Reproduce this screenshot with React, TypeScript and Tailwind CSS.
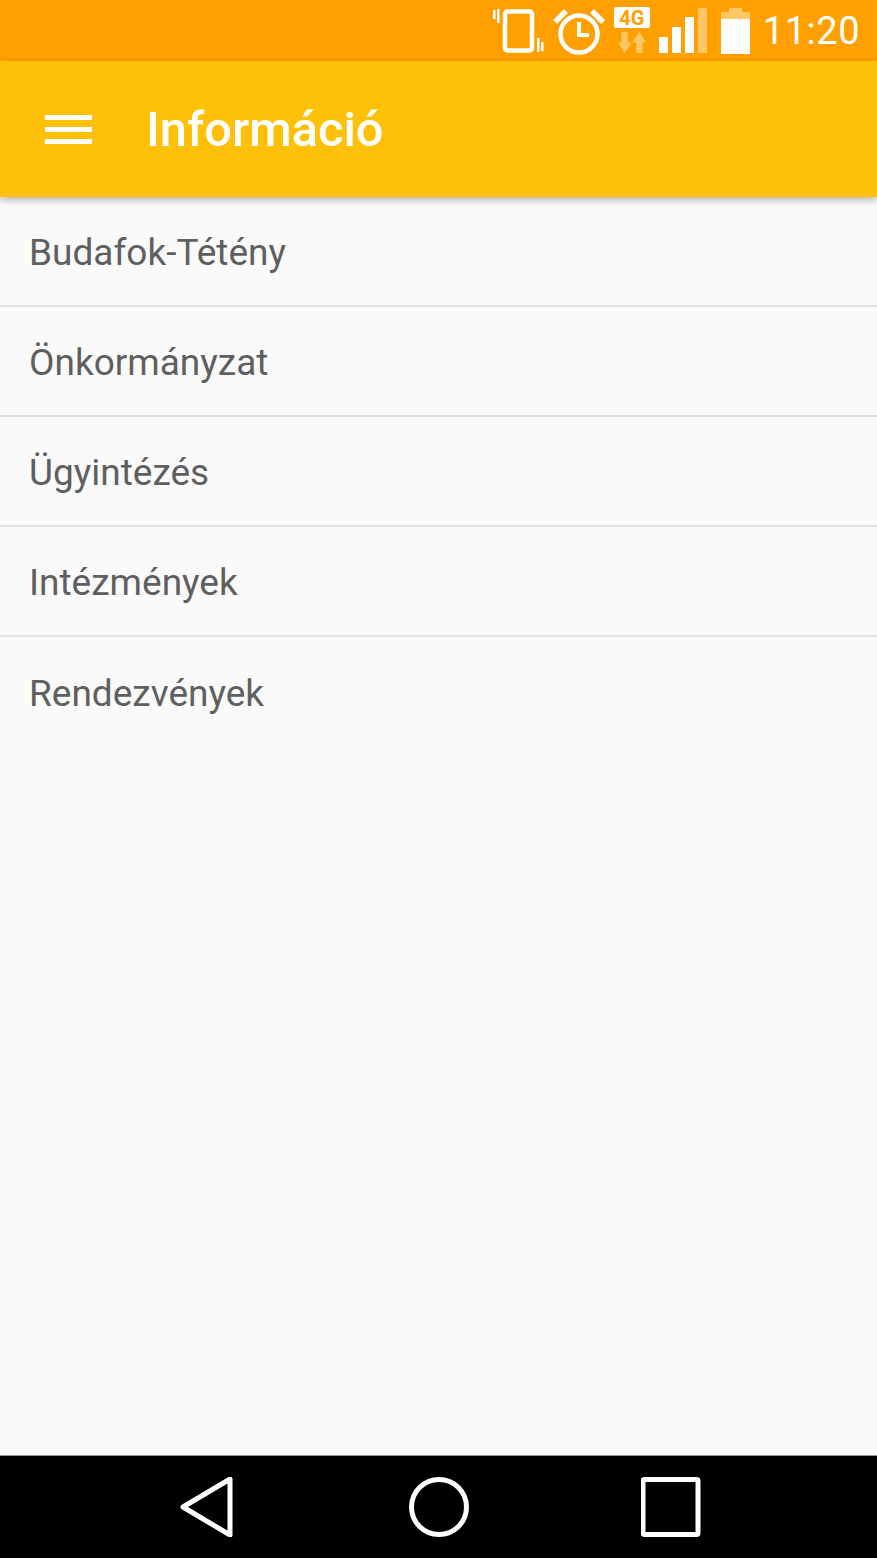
const items = ["Budafok-Tétény", "Önkormányzat", "Ügyintézés", "Intézmények", "Rendezvények"];

function StatusBar() {
  return (
    <div className="h-[61px] shrink-0 bg-[#ffa000] flex items-center justify-end pr-[17px] text-white">
      {/* vibrate */}
      <svg width="52" height="46" viewBox="0 0 52 46" className="mr-[8px]" fill="none">
        <rect x="12" y="3.500" width="27" height="39" rx="2.500" stroke="#fff" strokeWidth="4.500" />
        <rect x="0" y="2" width="2.500" height="9" fill="#fff" />
        <rect x="4" y="1" width="2.500" height="14" fill="#fff" />
        <rect x="44" y="30" width="2.500" height="14" fill="#fff" />
        <rect x="48" y="34" width="2.500" height="9" fill="#fff" />
      </svg>
      {/* alarm */}
      <svg width="52" height="48" viewBox="0 0 52 48" className="mr-[9px]" fill="none" stroke="#fff">
        <circle cx="26" cy="27" r="18.500" strokeWidth="4.500" />
        <path d="M26 15v13h10" strokeWidth="4" />
        <path d="M2 15 13 4" strokeWidth="5.500" />
        <path d="M50 15 39 4" strokeWidth="5.500" />
      </svg>
      {/* 4G */}
      <div className="w-[36px] h-[47px] mr-[9px] flex flex-col items-center">
        <div className="w-[36px] h-[21px] bg-white rounded-[2px] flex items-center justify-center text-[#ffa000] font-['Roboto',sans-serif] font-bold text-[20px] leading-none">
          4G
        </div>
        <svg width="32" height="21" viewBox="0 0 32 24" className="mt-[4px]" fill="#ffc766">
          <path d="M4 0h7v12h5l-8.500 12L0 12h4z" />
          <path d="M21 24h7V12h4L24.500 0 16 12h5z" />
        </svg>
      </div>
      {/* signal */}
      <svg width="50" height="46" viewBox="0 0 50 46" className="mr-[12px]">
        <rect x="0" y="29" width="9" height="16" fill="#fff" />
        <rect x="13" y="19" width="9" height="26" fill="#fff" />
        <rect x="26" y="9" width="9" height="36" fill="#fff" />
        <rect x="39" y="0" width="9" height="45" fill="#ffc766" />
      </svg>
      {/* battery */}
      <div className="w-[29px] h-[46px] mr-[13px] flex flex-col items-center">
        <div className="w-[13px] h-[4px] bg-[#ffc766]" />
        <div className="w-[29px] h-[7px] bg-[#ffc766]" />
        <div className="w-[29px] h-[35px] bg-white" />
      </div>
      <span className="font-['Roboto',sans-serif] text-[38px] leading-none tracking-[0.5px]">11:20</span>
    </div>
  );
}

function NavBar() {
  return (
    <div className="h-[103px] shrink-0 bg-black border-t border-[#9a9a9a] flex items-center justify-center">
      <div className="w-[232px] flex justify-center">
        <svg width="56" height="60" viewBox="0 0 56 60" fill="none" className="ml-[3px]">
          <path d="M3 30 50 2v56z" stroke="#fff" strokeWidth="5" strokeLinejoin="round" />
        </svg>
      </div>
      <div className="w-[232px] flex justify-center">
        <svg width="60" height="60" viewBox="0 0 60 60" fill="none">
          <circle cx="30" cy="30" r="27.500" stroke="#fff" strokeWidth="5" />
        </svg>
      </div>
      <div className="w-[232px] flex justify-center">
        <svg width="60" height="60" viewBox="0 0 60 60" fill="none">
          <rect x="2" y="2.500" width="55" height="55" rx="1.500" stroke="#fff" strokeWidth="5" />
        </svg>
      </div>
    </div>
  );
}

export default function App() {
  return (
    <div className="w-[877px] h-[1558px] flex flex-col bg-[#fafafa] font-['Roboto',sans-serif] overflow-hidden">
      <StatusBar />
      <header className="h-[136px] shrink-0 bg-[#ffc107] flex items-center pl-[45px] shadow-[0_3px_7px_rgba(0,0,0,0.28)] relative z-10">
        <div className="w-[47px] flex flex-col gap-[7px]">
          <div className="h-[5px] bg-white" />
          <div className="h-[5px] bg-white" />
          <div className="h-[5px] bg-white" />
        </div>
        <h1 className="ml-[54px] pt-[2px] text-[48.8px] font-medium text-white leading-none">Információ</h1>
      </header>
      <main className="flex-1">
        {items.map((item, idx) => (
          <div
            key={idx}
            className={`h-[110px] pl-[29px] pt-[3px] flex items-center text-[37px] text-[#5f5f5f] ${
              idx < items.length - 1 ? "border-b-2 border-[#e0e0e0]" : ""
            }`}
          >
            {item}
          </div>
        ))}
      </main>
      <NavBar />
    </div>
  );
}
